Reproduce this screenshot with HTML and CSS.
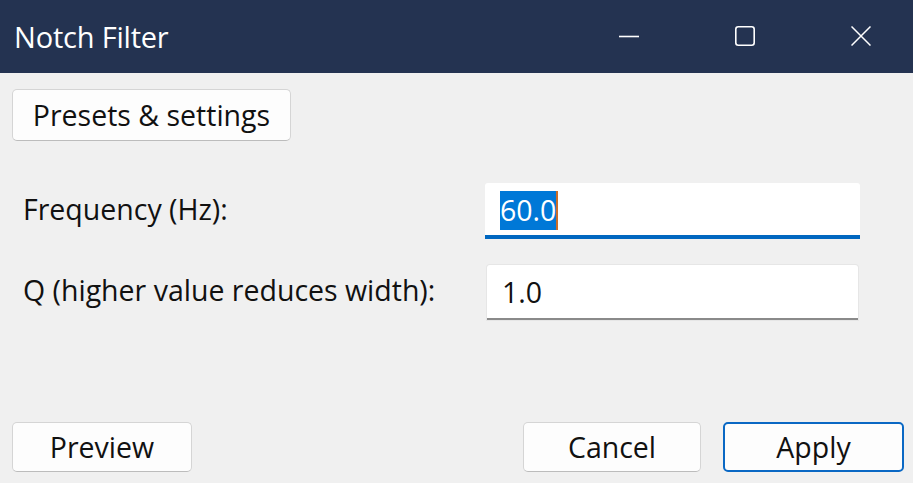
FILE: index.html
```html
<!DOCTYPE html>
<html>
<head>
<meta charset="utf-8">
<link rel="stylesheet" href="styles.css">
</head>
<body>
<div class="window">
  <div class="titlebar">
    <div class="title">Notch Filter</div>
    <div class="controls">
      <svg class="ctl" width="20" height="20" viewBox="0 0 20 20"><path d="M0 10.5H20" stroke="#fff" stroke-width="1.6" fill="none"/></svg>
      <svg class="ctl" width="20" height="20" viewBox="0 0 20 20"><rect x="0.8" y="0.8" width="18.4" height="18.4" rx="2.5" stroke="#fff" stroke-width="1.6" fill="none"/></svg>
      <svg class="ctl" width="20" height="20" viewBox="0 0 20 20"><path d="M0.5 0.5L19.5 19.5M19.5 0.5L0.5 19.5" stroke="#fff" stroke-width="1.5" fill="none"/></svg>
    </div>
  </div>
  <div class="main">
    <div class="top-row">
      <button class="btn btn-presets">Presets &amp; settings</button>
    </div>
    <div class="form">
      <div class="field">
        <div class="label">Frequency (Hz):</div>
        <div class="input input-focus"><span class="sel">60.0</span><span class="caret"></span></div>
      </div>
      <div class="field field-q">
        <div class="label">Q (higher value reduces width):</div>
        <div class="input input-q"><span>1.0</span></div>
      </div>
    </div>
    <div class="footer">
      <button class="btn btn-preview">Preview</button>
      <div class="spacer"></div>
      <button class="btn btn-cancel">Cancel</button>
      <button class="btn btn-apply">Apply</button>
    </div>
  </div>
</div>
</body>
</html>
```
FILE: styles.css
```css
html, body {
  margin: 0;
  padding: 0;
  background: #f0f0f0;
}
body {
  width: 913px;
  height: 483px;
  overflow: hidden;
  font-family: "Open Sans", "Noto Sans", sans-serif;
  color: #111;
}
.window {
  display: flex;
  flex-direction: column;
  height: 483px;
}
.titlebar {
  height: 73px;
  background: #243351;
  display: flex;
  align-items: center;
  color: #fff;
  flex-shrink: 0;
}
.title {
  padding-left: 14px;
  font-size: 29px;
  letter-spacing: -0.2px;
  margin-top: 0;
}
.controls {
  margin-left: auto;
  margin-right: 42px;
  display: flex;
  gap: 96px;
  align-items: center;
  margin-top: -2px;
}
.ctl {
  display: block;
}
.main {
  flex: 1;
  display: flex;
  flex-direction: column;
  padding: 16px 9px 11px 12px;
}
.btn {
  font-family: inherit;
  font-size: 28.5px;
  color: #111;
  background: #fdfdfd;
  border: 1px solid #d5d5d5;
  border-bottom-color: #bcbcbc;
  border-radius: 5px;
  padding: 0;
  height: 51px;
  line-height: 1;
  display: flex;
  align-items: center;
  justify-content: center;
}
.btn-presets {
  width: 279px;
  height: 52px;
}
.form {
  display: flex;
  flex-direction: column;
  margin-top: 42px;
  gap: 26px;
}
.field {
  display: flex;
  align-items: center;
}
.label {
  width: 473px;
  padding-left: 11px;
  box-sizing: border-box;
  font-size: 28.5px;
  margin-top: -5px;
}
.input {
  background: #fff;
  width: 375px;
  height: 56px;
  box-sizing: border-box;
  display: flex;
  align-items: center;
  padding-left: 15px;
  font-size: 28.5px;
  border-radius: 3px 3px 0 0;
  border-bottom: 2px solid #8a8a8a;
}
.input-focus {
  border-bottom: 4px solid #0067c0;
  padding-top: 2px;
}
.input-q {
  width: 371px;
  height: 55px;
  margin-left: 2px;
  box-shadow: 0 0 0 1px #e6e6e6;
}
.sel {
  background: #0078d7;
  color: #fff;
  height: 39px;
  display: flex;
  align-items: center;
}
.caret {
  width: 2px;
  height: 39px;
  background: #c96d2a;
}
.footer {
  margin-top: auto;
  display: flex;
  align-items: center;
}
.spacer {
  flex: 1;
}
.btn-preview {
  width: 180px;
  height: 50px;
}
.btn-cancel {
  width: 178px;
  height: 50px;
}
.btn-apply {
  width: 181px;
  height: 50px;
  margin-left: 22px;
  border: 2px solid #0a68c4;
}
```
